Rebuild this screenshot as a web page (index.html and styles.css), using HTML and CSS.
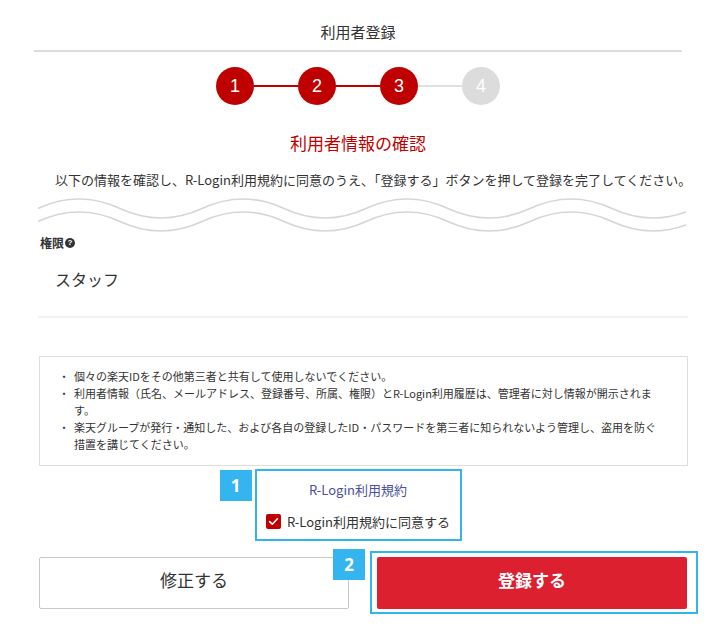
FILE: index.html
```html
<!DOCTYPE html>
<html lang="ja">
<head>
<meta charset="utf-8">
<title>利用者登録</title>
<link rel="stylesheet" href="styles.css">
</head>
<body>
<div class="page">
  <header class="header"><h1 class="title">利用者登録</h1></header>

  <ol class="steps">
    <li class="step is-done">1</li>
    <li class="bar is-done"></li>
    <li class="step is-done">2</li>
    <li class="bar is-done"></li>
    <li class="step is-done">3</li>
    <li class="bar"></li>
    <li class="step">4</li>
  </ol>

  <h2 class="subtitle">利用者情報の確認</h2>
  <p class="lead">以下の情報を確認し、R-Login利用規約に同意のうえ、「登録する」ボタンを押して登録を完了してください。</p>

  <svg class="wave" width="648" height="39" viewBox="0 0 648 39">
    <path d="M0 12.5 Q41 -6.5 82 12.5 T164 12.5 T246 12.5 T328 12.5 T410 12.5 T492 12.5 T574 12.5 T656 12.5" fill="none" stroke="#d6d6d6" stroke-width="1.7"/>
    <path d="M0 25.5 Q41 6.5 82 25.5 T164 25.5 T246 25.5 T328 25.5 T410 25.5 T492 25.5 T574 25.5 T656 25.5" fill="none" stroke="#d6d6d6" stroke-width="1.7"/>
  </svg>

  <div class="field">
    <div class="field-label">権限<span class="help">?</span></div>
    <div class="field-value">スタッフ</div>
  </div>

  <ul class="notice">
    <li><span class="dot">・</span><span>個々の楽天IDをその他第三者と共有して使用しないでください。</span></li>
    <li><span class="dot">・</span><span>利用者情報（氏名、メールアドレス、登録番号、所属、権限）とR-Login利用履歴は、管理者に対し情報が開示されます。</span></li>
    <li><span class="dot">・</span><span>楽天グループが発行・通知した、および各自の登録したID・パスワードを第三者に知られないよう管理し、盗用を防ぐ措置を講じてください。</span></li>
  </ul>

  <div class="agree">
    <div class="agree-box">
      <span class="badge badge-1">1</span>
      <a class="terms-link" href="#">R-Login利用規約</a>
      <label class="check-row">
        <span class="checkbox"><svg width="15" height="15" viewBox="0 0 15 15"><path d="M3.6 7.6 L6.3 10.2 L11.4 4.8" fill="none" stroke="#fff" stroke-width="1.6" stroke-linecap="round" stroke-linejoin="round"/></svg></span>
        <span class="check-text">R-Login利用規約に同意する</span>
      </label>
    </div>
  </div>

  <div class="actions">
    <button class="btn btn-secondary" type="button">修正する</button>
    <div class="submit-wrap">
      <span class="badge badge-2">2</span>
      <button class="btn btn-primary" type="button">登録する</button>
    </div>
  </div>
</div>
</body>
</html>
```

FILE: styles.css
```css
* { box-sizing: border-box; }

html, body {
  margin: 0;
  padding: 0;
  background: #fff;
}

body {
  font-family: "Noto Sans CJK JP", "Noto Sans", sans-serif;
  color: #333;
}

.page {
  margin-left: 34px;
  width: 654px;
}

.header {
  width: 648px;
  padding-top: 22px;
  border-bottom: 2px solid #dcdcdc;
}

.title {
  margin: 0 0 8px;
  font-size: 15px;
  line-height: 20px;
  font-weight: normal;
  text-align: center;
  color: #333;
}

.steps {
  list-style: none;
  margin: 15px 0 0;
  padding: 0;
  width: 648px;
  display: flex;
  justify-content: center;
  align-items: center;
}

.step {
  width: 38px;
  height: 38px;
  border-radius: 50%;
  background: #dcdcdc;
  color: #fff;
  font-family: "Liberation Sans", Arial, sans-serif;
  font-size: 18px;
  line-height: 38px;
  text-align: center;
}

.step.is-done { background: #bf0000; }

.bar {
  width: 44px;
  height: 2px;
  background: #e0e0e0;
}

.bar.is-done { background: #bf0000; }

.subtitle {
  margin: 26px 0 0;
  width: 648px;
  font-size: 17px;
  line-height: 24px;
  font-weight: normal;
  text-align: center;
  color: #bf0000;
}

.lead {
  margin: 15px 0 0 21px;
  font-size: 13px;
  line-height: 20px;
  white-space: nowrap;
  color: #333;
}

.wave {
  display: block;
  margin: 6px 0 0 4px;
}

.field {
  margin-left: 4px;
  width: 650px;
  border-bottom: 2px solid #f2f2f2;
}

.field-label {
  margin-left: 2px;
  font-size: 12px;
  line-height: 16px;
  font-weight: bold;
  display: flex;
  align-items: center;
  color: #333;
}

.help {
  display: inline-block;
  width: 10px;
  height: 10px;
  margin-left: 1px;
  border-radius: 50%;
  background: #333;
  color: #fff;
  font-family: "Liberation Sans", Arial, sans-serif;
  font-size: 8px;
  line-height: 10px;
  text-align: center;
  font-weight: bold;
}

.field-value {
  margin: 16px 0 0 17px;
  padding-bottom: 25px;
  font-size: 16px;
  line-height: 24px;
  color: #333;
}

.notice {
  list-style: none;
  margin: 38px 0 0 5px;
  padding: 11px 23px 12px 18px;
  width: 649px;
  border: 1px solid #dedede;
  font-size: 11px;
  line-height: 17px;
  color: #333;
}

.notice li {
  display: flex;
}

.dot {
  flex: none;
  width: 12px;
  margin-right: 4px;
  text-align: center;
}

.agree {
  margin-top: 3px;
  width: 648px;
  display: flex;
  justify-content: center;
}

.agree-box {
  position: relative;
  width: 207px;
  padding: 8px 0 6px;
  border: 2px solid #33b4ee;
  display: flex;
  flex-direction: column;
  align-items: center;
}

.badge {
  position: absolute;
  width: 32px;
  height: 31px;
  background: #35b5ef;
  color: #fff;
  font-family: "Open Sans", "Liberation Sans", sans-serif;
  font-weight: bold;
  font-size: 17px;
  line-height: 31px;
  text-align: center;
  z-index: 2;
}

.badge-1 {
  left: -37px;
  top: -1px;
}

.terms-link {
  font-size: 13px;
  line-height: 22px;
  color: #4b4f9e;
  text-decoration: none;
}

.check-row {
  margin-top: 10px;
  display: flex;
  align-items: center;
  gap: 6px;
  font-size: 13px;
  line-height: 22px;
  color: #333;
}

.checkbox {
  width: 15px;
  height: 15px;
  border-radius: 2px;
  background: #bf0000;
  display: block;
  margin-top: -2px;
}

.checkbox svg { display: block; }

.actions {
  margin: 16px 0 0 5px;
  display: flex;
  align-items: flex-start;
}

.btn {
  display: block;
  flex: none;
  width: 310px;
  height: 52px;
  padding: 0 0 6px;
  border-radius: 2px;
  font-family: "Noto Sans CJK JP", "Noto Sans", sans-serif;
  font-size: 17px;
  line-height: 24px;
  cursor: pointer;
}

.btn-secondary {
  background: #fff;
  border: 1px solid #c8c8c8;
  color: #333;
}

.submit-wrap {
  position: relative;
  flex: none;
  margin: -6px 0 0 21px;
  padding: 4px 9px 3px 5px;
  border: 2px solid #33b4ee;
}

.btn-primary {
  background: #dc2030;
  border: none;
  color: #fff;
  font-weight: bold;
}

.badge-2 {
  left: -39px;
  top: -4px;
}
```
